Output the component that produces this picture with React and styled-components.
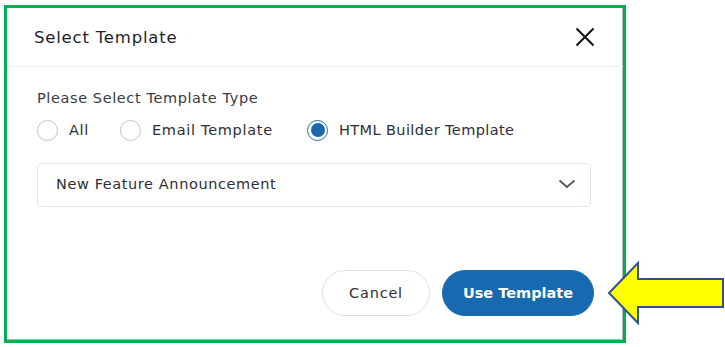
import styled, { createGlobalStyle } from "styled-components";

const GlobalStyle = createGlobalStyle`
  html, body {
    margin: 0;
    padding: 0;
    background: #ffffff;
  }
  body {
    font-family: "DejaVu Sans", "Noto Sans", sans-serif;
    color: #2b2b33;
  }
`;

const Page = styled.div`
  position: relative;
  width: 725px;
  height: 347px;
  padding: 5px 0 0 4px;
  box-sizing: border-box;
  overflow: hidden;
`;

const Frame = styled.div`
  width: 622px;
  height: 338px;
  box-sizing: border-box;
  border: 3px solid #00b050;
  background: #fff;
`;

const Dialog = styled.div`
  height: 100%;
  display: flex;
  flex-direction: column;
  box-shadow: inset -1px -1px 0 #b4b4b4;
`;

const Header = styled.div`
  height: 59px;
  flex-shrink: 0;
  display: flex;
  align-items: center;
  justify-content: space-between;
  padding: 0 28px 0 27px;
  box-sizing: border-box;
  border-bottom: 1px solid #eceef4;
  h2 {
    margin: 0;
    font-size: 16.5px;
    font-weight: 400;
    letter-spacing: 0.8px;
    color: #1f1f29;
  }
`;

const CloseButton = styled.button`
  border: 0;
  background: none;
  padding: 0;
  width: 20px;
  height: 20px;
  display: flex;
  cursor: pointer;
`;

const Body = styled.div`
  padding: 21px 32px 0 30px;
`;

const Label = styled.p`
  margin: 0;
  font-size: 14.5px;
  line-height: 20px;
  letter-spacing: 0.6px;
  color: #3a3a44;
`;

const RadioRow = styled.div`
  display: flex;
  align-items: center;
  margin-top: 11px;
  height: 22px;
`;

const RadioOption = styled.label`
  display: flex;
  align-items: center;
  gap: 11px;
  width: ${(p) => p.$width}px;
  font-size: 14.5px;
  letter-spacing: ${(p) => p.$spacing}px;
  color: #2e2e38;
  white-space: nowrap;
`;

const RadioCircle = styled.span`
  width: 21px;
  height: 21px;
  flex-shrink: 0;
  box-sizing: border-box;
  border-radius: 50%;
  border: 1.5px solid ${(p) => (p.$checked ? "#1d6db3" : "#c2c2c2")};
  display: flex;
  align-items: center;
  justify-content: center;
  &::after {
    content: "";
    display: ${(p) => (p.$checked ? "block" : "none")};
    width: 14px;
    height: 14px;
    border-radius: 50%;
    background: #1a67ad;
  }
`;

const Select = styled.div`
  margin-top: 22px;
  height: 44px;
  box-sizing: border-box;
  border: 1px solid #dfe3ea;
  border-radius: 5px;
  display: flex;
  align-items: center;
  justify-content: space-between;
  padding: 0 14px 2px 18px;
  font-size: 14.5px;
  letter-spacing: 0.6px;
  color: #2e2e38;
`;

const Footer = styled.div`
  margin-top: auto;
  display: flex;
  justify-content: flex-end;
  gap: 12px;
  padding: 0 29px 24px 0;
`;

const Button = styled.button`
  height: 46px;
  width: ${(p) => p.$width}px;
  padding: 0;
  border-radius: 23px;
  font-family: inherit;
  font-size: 14.5px;
  letter-spacing: ${(p) => (p.$primary ? 0 : 0.8)}px;
  font-weight: ${(p) => (p.$primary ? 600 : 400)};
  border: 1px solid ${(p) => (p.$primary ? "#176ab0" : "#dce1ea")};
  background: ${(p) => (p.$primary ? "#176ab0" : "#ffffff")};
  color: ${(p) => (p.$primary ? "#ffffff" : "#2e2e38")};
  cursor: pointer;
`;

const Arrow = styled.svg`
  position: absolute;
  left: 607px;
  top: 261px;
`;

const options = [
  { label: "All", width: 83, spacing: 0.6 },
  { label: "Email Template", width: 187, spacing: 0.7 },
  { label: "HTML Builder Template", width: 240, spacing: 0.4, checked: true },
];

export default function App() {
  return (
    <>
      <GlobalStyle />
      <Page>
        <Frame>
          <Dialog>
            <Header>
              <h2>Select Template</h2>
              <CloseButton aria-label="Close">
                <svg width="20" height="20" viewBox="0 0 20 20">
                  <path d="M1.5 1.5 L18.5 18.5 M18.5 1.5 L1.5 18.5" stroke="#111" strokeWidth="2" />
                </svg>
              </CloseButton>
            </Header>
            <Body>
              <Label>Please Select Template Type</Label>
              <RadioRow>
                {options.map((o) => (
                  <RadioOption key={o.label} $width={o.width} $spacing={o.spacing}>
                    <RadioCircle $checked={o.checked} />
                    {o.label}
                  </RadioOption>
                ))}
              </RadioRow>
              <Select>
                <span>New Feature Announcement</span>
                <svg width="18" height="10" viewBox="0 0 18 10">
                  <path d="M1.5 1.5 L9 8 L16.5 1.5" fill="none" stroke="#555a62" strokeWidth="2" />
                </svg>
              </Select>
            </Body>
            <Footer>
              <Button $width={108}>Cancel</Button>
              <Button $primary $width={152}>Use Template</Button>
            </Footer>
          </Dialog>
        </Frame>
        <Arrow width="120" height="66" viewBox="0 0 120 66">
          <path
            d="M2 32 L31 2 L31 18 L116 18 L116 46 L31 46 L31 62 Z"
            fill="#ffff00"
            stroke="#2f528f"
            strokeWidth="2"
            strokeLinejoin="miter"
          />
        </Arrow>
      </Page>
    </>
  );
}
